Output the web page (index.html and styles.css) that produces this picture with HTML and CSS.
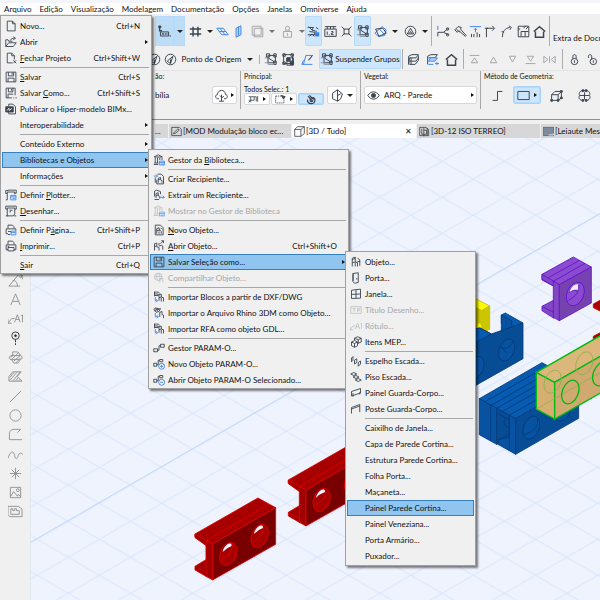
FILE: index.html
```html
<!DOCTYPE html>
<html lang="pt">
<head>
<meta charset="utf-8">
<title>3D / Tudo</title>
<link rel="stylesheet" href="styles.css">
</head>
<body>
<svg class="sprite" aria-hidden="true">
<symbol id="file" viewBox="0 0 16 16"><path d="M3 1.500h7l3.500 3.500v9.500H3zM10 1.500v3.500h3.500"/></symbol>
<symbol id="open" viewBox="0 0 16 16"><path d="M1 14V5h3l1 2h5M1 14l4-5h10l-4 5zM7 6c1-3 4-3 6-3M11 1l3 2-3 2"/></symbol>
<symbol id="close" viewBox="0 0 16 16"><path d="M10 14.500H3v-13h6l3.500 3.500v5M9 1.500V5h3.500M11 11l4 4M15 11l-4 4"/></symbol>
<symbol id="save" viewBox="0 0 16 16"><path d="M1.500 1.500h13v13h-13zM4.500 1.500v5h7v-5M9.500 2v3M4 14.500V9.500h8v5"/></symbol>
<symbol id="saveas" viewBox="0 0 16 16"><path d="M9 14.500H1.500v-13h12V11M4.500 1.500v5h6v-5M8.500 2v3M4 14.500V9.500h7M10.500 14.500h1M13 14.500h1M15 14.500h1"/></symbol>
<symbol id="bimx" viewBox="0 0 16 16"><path d="M5 5V1.500h5.500L14 5v9.500H5V12"/><path class="solid" d="M1 5h10v7H1z"/><path class="light" d="M3 10l2-3 1 3 3-3"/></symbol>
<symbol id="plotset" viewBox="0 0 16 16"><path d="M4 1.500h11v4h-2V4H3v2H1v-4h3M3 6v8.500H1M13 5v2"/><path class="blue" d="M7.500 8.500h7v6h-7zM8 10.500h6M10 12.500h3"/></symbol>
<symbol id="plot" viewBox="0 0 16 16"><path d="M3 5.500H1v-4h14v4h-2M3 4h10v8l-2 2.500H3zM1 14.500h3M12 14.500h3M6 7h4M6 9h2"/></symbol>
<symbol id="pageset" viewBox="0 0 16 16"><path d="M4 6V1.500h6l2 2V6M4 13H1.500V6.500h13V9M4 10h4M4 14h3"/><path class="blue" d="M8 9.500h6.500v5H8zM8 11.500h6"/></symbol>
<symbol id="print" viewBox="0 0 16 16"><path d="M4 6V1.500h6l2 2V6M4 13H1.500V6.500h13V13H12M4 10h8v4.500H4zM3.500 8.500h2"/></symbol>
<symbol id="library" viewBox="0 0 16 16"><path d="M1.500 4L7 1l5.500 3zM3 5v7M6 5v7M9 5v3M12 5v3M1.500 12H7M1 14h6"/><path class="blue" d="M8.500 9.500h7v5h-7zM8.500 11.500h7M11 13.500h3"/></symbol>
<symbol id="chairdoc" viewBox="0 0 16 16"><path d="M3 14.500v-13h7l3.500 3.500v9.500zM5 13V6l3-1 1 4M5 9l4-1 2 2v3M8 10v3M10 5l2 2"/></symbol>
<symbol id="container" viewBox="0 0 16 16"><path d="M6 1.500h5l3 3v10H5V9M7 13V7l3-1v3l2 1v3M7 9l3-1"/><path class="blue" d="M1 4h5M4 2l2 2-2 2"/><path d="M3 6v7"/></symbol>
<symbol id="extract" viewBox="0 0 16 16"><path d="M2 10V3l3-1.500 5 2V7M4 12V6l3-1v4l2 1v3M4 9l3-1M2 14h6"/><path class="blue" d="M9 11h6M13 9l2 2-2 2"/></symbol>
<symbol id="chair" viewBox="0 0 16 16"><path d="M3 14V3l4-1.500V8l3 1v5M3 9l4-1M3 5l4-2M7 9v5M9 8l4-1v6M10 3l3 2v3"/></symbol>
<symbol id="chairopen" viewBox="0 0 16 16"><path d="M2 14V5l3-1v5l3 1v4M2 9l3-1M8 8l3-1 2 1v5M8 7V4M10 5l4-4M11 1h3v3"/></symbol>
<symbol id="globe" viewBox="0 0 16 16"><path d="M7 1.500a5 5 0 1 0 5 5 5 5 0 0 0-5-5M2 6h10M7 1.500c-3 3-3 7 0 10M7 1.500c3 3 3 7 0 10M9 9l4-1v6M9 14v-5"/></symbol>
<symbol id="importa" viewBox="0 0 16 16"><path d="M1.500 1.500H7L9 3M2 4h5v2H2M8 13V5l3-1v4l3 1v5M8 9l3-1M11 9v5M2 1v6"/><path class="blue" d="M3 8v5h3M4 11l2 2-2 2"/></symbol>
<symbol id="importb" viewBox="0 0 16 16"><path d="M1 3l3-2 2 2 4-1-2 4-4 1zM2 5l6-3M9 13V7l3-1v4l2 1v4"/><path d="M3 2l4 4M5 1l4 4"/><path class="blue" d="M3 8v5h4M5 11l2 2-2 2"/></symbol>
<symbol id="param" viewBox="0 0 16 16"><path d="M1 9h5v4H1zM10 3h5v4h-5zM6 11h2V5h2"/></symbol>
<symbol id="paramplus" viewBox="0 0 16 16"><path d="M1 7h4v4H1zM9 2h4v3H9zM5 9h2V3h2"/><circle class="blue" cx="11.500" cy="11" r="4"/><path class="blue" d="M9.500 11h4M11.500 9v4"/></symbol>
<symbol id="paramopen" viewBox="0 0 16 16"><path d="M1 7h4v4H1zM9 2h4v3H9zM5 9h2V3h2"/><circle class="blue" cx="11.500" cy="11" r="4"/><path class="blue" d="M9.500 11h4"/></symbol>
<symbol id="door" viewBox="0 0 16 16"><path d="M4 2l7-1v13l-5 1-2-2zM4 2v10M9 8v2"/></symbol>
<symbol id="window" viewBox="0 0 16 16"><path d="M2 3l12-1.500v12L2 14zM8 2v12M2 8.500l12-.500"/></symbol>
<symbol id="title" viewBox="0 0 16 16"><path d="M1 3.500h14v9H1zM3.500 6h4M5.500 6v4.500M10 10.500V6h3v2.500h-3"/></symbol>
<symbol id="label" viewBox="0 0 16 16"><path d="M0 13l4-5h3M0 9v4h4M7 12l3-8 3 8M8 9h4M15.500 12V4l-1.500 1.500"/></symbol>
<symbol id="mep" viewBox="0 0 16 16"><path d="M2 8l4-2 4 2v5l-4 2-4-2zM2 8l4 2 4-2M6 10v5M6 6V3l4-2 5 2v5l-5 2M6 3l5 2 4-2M11 5v5"/></symbol>
<symbol id="riser" viewBox="0 0 16 16"><path d="M2 4l2-2v5L2 9zM6 7l3-2v5l-3 2zM11 10l3-2v4l-3 3z"/></symbol>
<symbol id="tread" viewBox="0 0 16 16"><path d="M1 4l4-2 4 2-4 2zM4 8l4-2 4 2-4 2zM7 12l4-2 4 2-4 2z"/></symbol>
<symbol id="panel" viewBox="0 0 16 16"><path d="M2 6l12-4v6L2 12zM4 13V8M13 7v3"/></symbol>
<symbol id="post" viewBox="0 0 16 16"><path d="M2 14V6l11-4v10M2 8l11-4"/></symbol>
<symbol id="xyz" viewBox="0 0 16 16"><path class="thick" d="M2 1v6h3M2 1L.500 3M2 1l2 2"/><path d="M3 8.500h10v5H3zM5 10l2 2M7 10l-2 2M9 10v2M11 10v2M14 13.500h2"/></symbol>
<symbol id="hash" viewBox="0 0 16 16"><path class="thick" d="M5 2v12M11 2v12M1 5h14M1 11h14"/></symbol>
<symbol id="plane" viewBox="0 0 16 16"><path class="blue" d="M1 4h8l6 8H7zM4 8h8M5 4l6 8"/></symbol>
<symbol id="vplane" viewBox="0 0 16 16"><path class="bluefill" d="M5 4l6-3v11l-6 3zM8 2v11"/></symbol>
<symbol id="trace" viewBox="0 0 16 16"><path d="M1.500 1.500h11v11h-11zM4 4h10.500v10.500H4z"/></symbol>
<symbol id="person" viewBox="0 0 16 16"><circle cx="8" cy="4" r="2.500"/><path d="M3 8h10v7H3zM6 6v2M10 6v2M8 10v3"/></symbol>
<symbol id="guide" viewBox="0 0 16 16"><path d="M1 3h7l-2 3 6 2M2 2l5 5M1 12h9M3 8l7 1-1 3M3 14l3-3 3 3M11 3l3 2"/><path class="bluesolid" d="M10 9h5v5h-5z"/></symbol>
<symbol id="ruler" viewBox="0 0 16 16"><path d="M1 2h14M1 5h14v9H1zM4 8v4M6 12h1M9 8h2v2H9v2h3M4 2v3M8 2v3M12 2v3"/></symbol>
<symbol id="snap" viewBox="0 0 16 16"><path d="M2 2l4 4M14 2l-4 4M2 14l4-4M14 14l-4-4M5 5h6v6H5z"/></symbol>
<symbol id="group" viewBox="0 0 16 16"><path d="M5 3h9v9H5zM3 1h4v4H3zM12 1h3v4h-3zM12 10h3v4h-3zM5 6l8 5"/><path class="muted" d="M1 6h4v8h7M1 12h4"/></symbol>
<symbol id="groupb" viewBox="0 0 16 16"><path d="M2 2h11v11H2zM1 1h3v3H1zM11 1h3v3h-3zM1 11h3v3H1zM6 6h8v9H6z"/><path class="solid" d="M6 6h4v4H6zM10 10h4v4h-4z"/></symbol>
<symbol id="rotate" viewBox="0 0 16 16"><path class="blue" d="M1 10l9-8 5 4-2 7-8 1zM6 4l7 8"/><path d="M2 5l9-1 4 6-9 4z"/></symbol>
<symbol id="circletri" viewBox="0 0 16 16"><circle cx="8" cy="8" r="6.500"/><path d="M4 11l4-7 4 7zM6 11l2-3 2 3"/></symbol>
<symbol id="scissors" viewBox="0 0 16 16"><path class="blue" d="M1 1v5"/><path d="M1 9h7l6-5M8 9l6 3M1 9v5"/><circle cx="13" cy="5" r="1.500"/><circle cx="13" cy="12" r="1.500"/></symbol>
<symbol id="axe" viewBox="0 0 16 16"><path d="M1 6l4-4 4 1-1 2 7 8-1 1-8-7-2 2zM3 5l4 4"/></symbol>
<symbol id="adjust" viewBox="0 0 16 16"><path class="blue" d="M1 2h14M8 9V4M6 6l2-2 2 2"/><path d="M3 15v-4M6 15v-4M10 15V9M13 15v-4"/></symbol>
<symbol id="corner" viewBox="0 0 16 16"><path d="M3 15V4h9M10 1l3 3-3 3M1 4h4"/></symbol>
<symbol id="arc" viewBox="0 0 16 16"><path d="M3 15C3 8 6 4 12 3M11 1l3 2-2 3M2 8l3 1"/></symbol>
<symbol id="resize" viewBox="0 0 16 16"><path d="M1.500 1.500h13v13h-13zM5 14V8h5v6M11 5l3-3M8 4l3-3M1 5h3M9 8h5"/></symbol>
<symbol id="house" viewBox="0 0 16 16"><path class="thick" d="M1 8l7-6 7 6M3 8v7h10V8"/></symbol>
<symbol id="compass" viewBox="0 0 16 16"><circle cx="8" cy="8" r="6.500"/><path d="M8 13l3-9-7 6zM8 8v5"/></symbol>
<symbol id="poly" viewBox="0 0 16 16"><path class="blue" d="M3 14l3-11h8l-4 6M1 14h13M3 9L1 14"/><path d="M9 9l5-6"/></symbol>
<symbol id="layers" viewBox="0 0 16 16"><path d="M2 14V4l4-2h8l-3 4H3zM3 10h8l3-4M3 14h7l4-5V3M5 6v8"/></symbol>
<symbol id="layersblue" viewBox="0 0 16 16"><path d="M2 14V4l4-2h8l-3 4H3"/><path class="bluefill" d="M3 10l3-4h8l-3 4z"/><path class="blue" d="M3 14h6M11 13h5M13.500 11v4"/></symbol>
<symbol id="toptri" viewBox="0 0 16 16"><path d="M2 3h12M4 12h8L8 6z"/></symbol>
<symbol id="uptri" viewBox="0 0 16 16"><path d="M4 12h8L8 5z"/></symbol>
<symbol id="downtri" viewBox="0 0 16 16"><path d="M4 4h8l-4 7z"/></symbol>
<symbol id="bottomtri" viewBox="0 0 16 16"><path d="M2 13h12M4 4h8l-4 6z"/></symbol>
<symbol id="fliptri" viewBox="0 0 16 16"><path d="M1 4v8l5-4zM15 4v8l-5-4zM8 4v8"/></symbol>
<symbol id="lock" viewBox="0 0 16 16"><path d="M6 7V4c0-2.500 4-2.500 4 0v3M8 9v3"/><ellipse cx="8" cy="10.500" rx="4" ry="3.800"/></symbol>
<symbol id="unlock" viewBox="0 0 16 16"><path d="M7 8V4c0-2.500-4-2.500-4 0v2M9 9v3"/><ellipse cx="9" cy="10.500" rx="4" ry="3.800"/></symbol>
<symbol id="tree" viewBox="0 0 16 16"><path d="M8 15V7M5 15h6M5 12H3C0 11 0 7 3 7c0-7 10-7 10 0 3 0 3 4 0 5h-2M8 11l3-2M8 10L6 8"/></symbol>
<symbol id="pick" viewBox="0 0 16 16"><path d="M1 4h8v5H1M4 4v8M1 12l2-2M9 4h3v7M14 3v8"/></symbol>
<symbol id="marquee" viewBox="0 0 16 16"><path class="dash" d="M1 3h12v10H1z"/><path class="solid" d="M9 2l6 2-3 3z"/></symbol>
<symbol id="clip" viewBox="0 0 16 16"><path class="thick" d="M2 8c0 8 11 8 11 1 0-5-7-5-7 0 0 3 4 3 4 0M3 3l6 7M5 2l6 6"/></symbol>
<symbol id="wallface" viewBox="0 0 16 16"><path d="M2 5l6-4v14l-6-3zM8 1l6 5-2 6-4 3M8 8l4-2"/></symbol>
<symbol id="eye" viewBox="0 0 16 16"><path d="M1 8c4-6 10-6 14 0-4 6-10 6-14 0z"/><circle class="solid" cx="8" cy="8" r="2.500"/></symbol>
<symbol id="step" viewBox="0 0 16 16"><path d="M2 14h6V3h6"/></symbol>
<symbol id="rect" viewBox="0 0 16 16"><path d="M1 3h14v10H1z"/></symbol>
<symbol id="box3d" viewBox="0 0 16 16"><path d="M2 7h8v7H2zM2 7l4-4h8v8l-4 3M10 7l4-4"/><path class="solid" d="M1 13h2v2H1zM9 13h2v2H9zM13 10h2v2h-2zM13 2h2v2h-2z"/></symbol>
<symbol id="brain" viewBox="0 0 16 16"><path d="M6 2C1 2 1 7 2 8c-2 3 0 6 4 6M10 2c5 0 5 5 4 6 2 3 0 6-4 6M8 4v9M2 8h12M6 2h4"/><path class="solid" d="M5 1h2v2H5zM9 1h2v2H9zM5 13h2v2H5zM9 13h2v2H9z"/></symbol>
<symbol id="sheet" viewBox="0 0 16 16"><path d="M1 2h11l3 3v9H1zM3 11l7-7 2 2-6 5H3z"/></symbol>
<symbol id="cube" viewBox="0 0 16 16"><path d="M1 5h9v10H1zM1 5l4-4h10l-5 4M15 1v10l-5 4"/></symbol>
<symbol id="section" viewBox="0 0 16 16"><path d="M1 2h9l4 3v9H1zM4 4v8h7V6H7M7 3v12M12 3v11"/></symbol>
<symbol id="layout" viewBox="0 0 16 16"><path class="slate" d="M0 2h16v12H0z"/><path class="light" d="M8 13h7v-2"/></symbol>
<symbol id="angle" viewBox="0 0 16 16"><path d="M1 14L11 2M1 14h12M5 8c4 0 5 3 5 6M16 2c-3 7-5 0-2 0l2 5"/></symbol>
<symbol id="letter" viewBox="0 0 16 16"><path d="M3 14L8 2l5 12M5 10h6"/></symbol>
<symbol id="pin" viewBox="0 0 16 16"><circle cx="8" cy="5" r="4"/><circle class="solid" cx="8" cy="5" r="1"/><path d="M8 9v3M8 13v2"/></symbol>
<symbol id="zone" viewBox="0 0 16 16"><path d="M5 2h4c3 0 3 2 3 3 4 1 4 5 0 6 0 3-1 3-4 3-3 0-3-1-3-3-5-1-5-5 0-5zM3 8l3-3M4 10l7-7M6 12l8-7M8 14l6-6M3 6h10M3 10h10"/></symbol>
<symbol id="hatch" viewBox="0 0 16 16"><path d="M1 13V8l4-5h9l-4 5 5 5zM2 12l8-9M5 13l8-10M2 9l5-6M8 13l3-4M11 13l2-2"/></symbol>
<symbol id="line" viewBox="0 0 16 16"><path d="M2 14L14 2"/></symbol>
<symbol id="circle" viewBox="0 0 16 16"><circle cx="8" cy="8" r="6"/></symbol>
<symbol id="polyline" viewBox="0 0 16 16"><path d="M15 13.500H1.500V8c0-5 3-5.500 6-5.500h6L10 6"/></symbol>
<symbol id="spline" viewBox="0 0 16 16"><path d="M0 12C3 3 6 4 7 9c1 5 3 4 4 0 1-3 3-3 5-1"/></symbol>
<symbol id="star" viewBox="0 0 16 16"><path d="M8 2v12M2 8h12M4 4l8 8M12 4l-8 8"/></symbol>
<symbol id="image" viewBox="0 0 16 16"><path d="M2.500 2.500h11v11h-11zM3 12l3-5 4 5 1-2 3 3"/><circle cx="10.500" cy="5.500" r="1.500"/></symbol>
<symbol id="drawing" viewBox="0 0 16 16"><path d="M0 2.500h11l4 3v8H2l-2-2zM3 5v6h9V7H9V5H7v2H5V5z"/></symbol>
</svg>

<div class="app">
<nav class="menubar">
<button>Arquivo</button><button>Edição</button><button>Visualização</button><button>Modelagem</button><button>Documentação</button><button>Opções</button><button>Janelas</button><button>Omniverse</button><button>Ajuda</button>
</nav>

<div class="bar bar-main">
<button class="on deep"><svg><use href="#xyz"/></svg></button><button class="on deep caret"></button>
<button><svg><use href="#hash"/></svg></button><button class="caret"></button>
<button class="dim"><svg><use href="#plane"/></svg></button>
<button><svg><use href="#vplane"/></svg></button>
<button class="dim"><svg><use href="#trace"/></svg></button><button class="caret dim"></button>
<button class="dim"><svg><use href="#person"/></svg></button><button class="caret dim"></button>
<button class="on"><svg><use href="#guide"/></svg></button>
<button><svg><use href="#ruler"/></svg></button>
<button><svg><use href="#snap"/></svg></button>
<button class="on"><svg><use href="#group"/></svg></button>
<button><svg><use href="#rotate"/></svg></button><button class="caret"></button>
<button><svg><use href="#circletri"/></svg></button><button class="caret"></button>
<i class="rule"></i>
<button><svg><use href="#scissors"/></svg></button>
<button><svg><use href="#axe"/></svg></button>
<button><svg><use href="#adjust"/></svg></button>
<button><svg><use href="#corner"/></svg></button>
<button><svg><use href="#arc"/></svg></button>
<button><svg><use href="#resize"/></svg></button>
<button><svg><use href="#house"/></svg></button>
<i class="rule"></i>
<span class="extra">Extra de Docu</span>
</div>

<div class="bar bar-edit">
<button><svg><use href="#compass"/></svg></button>
<button><svg><use href="#compass"/></svg></button>
<button class="origin">Ponto de Origem<span class="caret"></span></button>
<i class="rule short"></i>
<button><svg><use href="#group"/></svg></button>
<button><svg><use href="#groupb"/></svg></button>
<button><svg><use href="#poly"/></svg></button>
<button class="on wide"><svg><use href="#group"/></svg>Suspender Grupos</button>
<i class="rule"></i>
<button><svg><use href="#layers"/></svg></button>
<button><svg><use href="#layersblue"/></svg></button>
<button><svg><use href="#house"/></svg></button>
<i class="rule"></i>
<button class="dim"><svg><use href="#toptri"/></svg></button>
<button class="dim"><svg><use href="#uptri"/></svg></button>
<button class="dim"><svg><use href="#downtri"/></svg></button>
<button class="dim"><svg><use href="#bottomtri"/></svg></button>
<button class="dim"><svg><use href="#fliptri"/></svg></button>
<i class="rule"></i>
<button><svg><use href="#lock"/></svg></button>
<button><svg><use href="#unlock"/></svg></button>
</div>

<div class="info">
<section>
<h2>ão:</h2>
<div class="fields split"><span>bília</span><button class="box"><svg><use href="#tree"/></svg><span class="next"></span></button></div>
</section>
<section>
<h2>Principal:</h2>
<div class="fields picks">
<div class="count">Todos Selec.: 1
<div class="trio"><button class="box"><svg><use href="#pick"/></svg><span class="next"></span></button><button class="box"><svg><use href="#marquee"/></svg><span class="next"></span></button><button class="box on"><svg><use href="#clip"/></svg></button></div></div>
<button class="box"><svg><use href="#wallface"/></svg><span class="caret"></span></button>
</div>
</section>
<section>
<h2>Vegetal:</h2>
<div class="fields"><button class="box layer"><svg><use href="#eye"/></svg><span>ARQ - Parede</span><span class="next"></span></button></div>
</section>
<section>
<h2>Método de Geometria:</h2>
<div class="fields shapes"><button><svg><use href="#step"/></svg></button><button class="box on"><svg><use href="#rect"/></svg><span class="next"></span></button><button><svg><use href="#box3d"/></svg></button><button><svg><use href="#brain"/></svg></button></div>
</section>
</div>

<div class="tabs">
<button class="first">...</button>
<button><svg><use href="#sheet"/></svg>[MOD Modulação bloco ec...</button>
<button class="active"><svg><use href="#cube"/></svg>[3D / Tudo]<span class="x">✕</span></button>
<button><svg><use href="#section"/></svg>[3D-12 ISO TERREO]</button>
<button><svg><use href="#layout"/></svg>[Leiaute Mest</button>
</div>

<div class="work">
<aside class="tools">
<div><button><svg><use href="#angle"/></svg></button><button><svg><use href="#letter"/></svg></button><button><svg><use href="#label"/></svg></button></div>
<div><button class="strong"><svg><use href="#pin"/></svg></button><button><svg><use href="#zone"/></svg></button><button><svg><use href="#hatch"/></svg></button></div>
<div><button><svg><use href="#line"/></svg></button><button><svg><use href="#circle"/></svg></button><button><svg><use href="#polyline"/></svg></button></div>
<div><button><svg><use href="#spline"/></svg></button><button><svg><use href="#star"/></svg></button><button><svg><use href="#image"/></svg></button><button><svg><use href="#drawing"/></svg></button></div>
</aside>
<svg class="scene" viewBox="31 138 569 462" preserveAspectRatio="xMinYMin slice">
<defs>
<pattern id="grid" x="68.300" y="413.300" width="62.300" height="36" patternUnits="userSpaceOnUse"><path d="M0 0L62.300 36M62.300 0L0 36" stroke="#d8e5fb" fill="none"/></pattern>
<g id="block" stroke-linejoin="round">
<path class="top" d="M495 432L684 324L737 353L548 462L530 451L530 458L495 440z"/>
<path class="side" d="M495 432L548 462L530 468L495 443zM495 529L530 508V560L495 540z"/>
<path class="side" d="M528 452L548 462V570L528 559z"/>
<path class="front" d="M548 462L737 353V463L548 570z"/>
<path class="edge" d="M528 452L716 343M495 529L528 548"/>
<g id="hole"><ellipse class="top" cx="595" cy="492" rx="24" ry="36" transform="rotate(22 595 492)"/><path d="M580 478Q590 458 604 461L605 468Q588 474 578 486z" fill="#eef3fe"/><path class="edge" d="M607 464Q609 492 575 508"/></g>
<use href="#hole" x="94" y="-54"/>
</g>
</defs>
<rect x="31" y="138" width="1600" height="1400" fill="#eef3fe"/>
<rect x="31" y="138" width="1600" height="1400" fill="url(#grid)"/>
<path d="M31 542L1200 -133" stroke="#bfd8f8" fill="none"/>
<g transform="translate(30 390) scale(.3333)">
<use href="#block" class="red"/><use href="#block" class="red" x="280" y="-162"/>
</g>
<g transform="translate(470 240) scale(.3333)">
<g class="yellow"><path class="top" d="M0 167L59 198L35 212L0 194z"/><path class="front" d="M0 194L35 212L59 198V268L35 280L0 290z"/><path class="top" d="M18 262Q22 244 32 250Q40 262 32 272z"/></g>
<g class="blue3d">
<path class="top" d="M94 225L106 219L159 249L128 262L94 250z"/>
<path class="side" d="M94 225L125 242V268L94 284z"/>
<path class="front" d="M0 272L30 264L64 282L159 249V356L0 446z"/>
<path class="top" d="M0 268L30 264L64 282L0 317z"/>
<ellipse class="side" cx="110" cy="330" rx="22" ry="35" transform="rotate(22 110 330)"/><path class="edge" d="M92 320Q112 335 129 306M92 320L110 339"/>
<ellipse class="side" cx="18" cy="383" rx="22" ry="35" transform="rotate(22 18 383)"/>
<path class="top" d="M28 476L216 368L326 428L137 536z"/>
<path class="side" d="M28 476L80 505V613L28 584z"/>
<path class="front" d="M80 505L118 526V600L80 613z"/>
<path class="side" d="M118 526L137 536V643L118 632L84 613V600L118 591z"/>
<path class="front" d="M137 536L326 428V535L137 643z"/>
<path class="edge" d="M45 485L233 378M64 496L252 388M80 505L268 397M98 514L287 407M118 526L307 418M62 495V602M118 526V632M84 600L118 581M84 520L118 540M104 535Q96 555 118 566"/>
<ellipse class="side" cx="184" cy="563" rx="23" ry="36" transform="rotate(22 184 563)"/><path class="edge" d="M202 535Q210 570 164 584"/>
<ellipse class="side" cx="278" cy="509" rx="23" ry="36" transform="rotate(22 278 509)"/>
</g>
<g class="purple">
<path class="top" d="M216 103L310 51L364 81L268 134L252 124V139L216 120z"/>
<path class="side" d="M216 103L252 124V139L216 118zM216 199L252 180V235L216 212z"/>
<path class="side" d="M250 124L268 134V242L250 232z"/>
<path class="front" d="M268 134L364 81V189L268 242z"/>
<path class="edge" d="M250 124L345 70M235 113L329 61M216 199L250 217"/>
<ellipse class="top" cx="316" cy="162" rx="25" ry="37" transform="rotate(22 316 162)"/><path d="M300 152Q310 130 325 133L325 151Q318 144 300 157z" fill="#eef3fe"/><path class="edge" d="M326 134Q332 163 295 181M298 158Q316 144 322 157"/>
</g>
<g class="red"><path class="top" d="M370 192L410 170V223L370 203zM370 289L410 268V310L370 300z"/></g>
<g class="wood">
<path class="side" d="M199 397L254 427V537L199 507z"/>
<path class="top" d="M199 397L440 259L495 290L254 427z"/>
<path class="front" d="M254 427L495 290V400L254 537z"/>
<path class="faint" d="M199 507L440 370"/>
<ellipse class="faint" cx="248" cy="425" rx="24" ry="36" transform="rotate(22 248 425)"/>
<ellipse class="faint" cx="343" cy="370" rx="24" ry="36" transform="rotate(22 343 370)"/>
<ellipse cx="301" cy="456" rx="24" ry="37" transform="rotate(22 301 456)"/>
<ellipse cx="394" cy="402" rx="24" ry="37" transform="rotate(22 394 402)"/>
</g>
</g>
</svg>
</div>
</div>

<div class="menu menu-file">
<button><svg><use href="#file"/></svg><span>Novo...</span><kbd>Ctrl+N</kbd></button>
<button class="parent"><svg><use href="#open"/></svg><span>Abrir</span><b class="next"></b></button>
<button><svg><use href="#close"/></svg><span><u>F</u>echar Projeto</span><kbd>Ctrl+Shift+W</kbd></button>
<hr>
<button><svg><use href="#save"/></svg><span><u>S</u>alvar</span><kbd>Ctrl+S</kbd></button>
<button><svg><use href="#saveas"/></svg><span>Salvar <u>C</u>omo...</span><kbd>Ctrl+Shift+S</kbd></button>
<button><svg><use href="#bimx"/></svg><span>Publicar o Hiper-modelo BIMx...</span></button>
<button class="parent"><span>Interoperabilidade</span><b class="next"></b></button>
<hr>
<button class="parent"><span>Conteúdo Externo</span><b class="next"></b></button>
<button class="parent sel"><span>Bibliotecas e Objetos</span><b class="next"></b></button>
<button class="parent"><span>Informações</span><b class="next"></b></button>
<hr>
<button><svg><use href="#plotset"/></svg><span>Definir <u>P</u>lotter...</span></button>
<button><svg><use href="#plot"/></svg><span><u>D</u>esenhar...</span></button>
<hr>
<button><svg><use href="#pageset"/></svg><span>Definir P<u>á</u>gina...</span><kbd>Ctrl+Shift+P</kbd></button>
<button><svg><use href="#print"/></svg><span><u>I</u>mprimir...</span><kbd>Ctrl+P</kbd></button>
<hr>
<button><span><u>S</u>air</span><kbd>Ctrl+Q</kbd></button>
</div>

<div class="menu menu-library">
<button><svg><use href="#library"/></svg><span>Gestor da <u>B</u>iblioteca...</span></button>
<hr>
<button><svg><use href="#container"/></svg><span>Criar Recipiente...</span></button>
<button><svg><use href="#extract"/></svg><span>Extrair um Recipiente...</span></button>
<button disabled><svg><use href="#library"/></svg><span>Mostrar no Gestor de Biblioteca</span></button>
<hr>
<button><svg><use href="#chairdoc"/></svg><span><u>N</u>ovo Objeto...</span></button>
<button><svg><use href="#chairopen"/></svg><span><u>A</u>brir Objeto...</span><kbd>Ctrl+Shift+O</kbd></button>
<button class="parent sel"><svg><use href="#save"/></svg><span>Salvar Seleção como...</span><b class="next"></b></button>
<button disabled><svg><use href="#globe"/></svg><span>Compartilhar Objeto...</span></button>
<hr>
<button><svg><use href="#importa"/></svg><span>Importar Blocos a partir de DXF/DWG</span></button>
<button><svg><use href="#importb"/></svg><span>Importar o Arquivo Rhino 3DM como Objeto...</span></button>
<button><svg><use href="#importa"/></svg><span>Importar RFA como objeto GDL...</span></button>
<hr>
<button><svg><use href="#param"/></svg><span>Gestor PARAM-O...</span></button>
<button><svg><use href="#paramplus"/></svg><span>Novo Objeto PARAM-O...</span></button>
<button><svg><use href="#paramopen"/></svg><span>Abrir Objeto PARAM-O Selecionado...</span></button>
</div>

<div class="menu menu-save">
<button><svg><use href="#chair"/></svg><span>Objeto...</span></button>
<button><svg><use href="#door"/></svg><span>Porta...</span></button>
<button><svg><use href="#window"/></svg><span>Janela...</span></button>
<button disabled><svg><use href="#title"/></svg><span>Título Desenho...</span></button>
<button disabled><svg><use href="#label"/></svg><span>Rótulo...</span></button>
<button><svg><use href="#mep"/></svg><span>Itens MEP...</span></button>
<hr>
<button><svg><use href="#riser"/></svg><span>Espelho Escada...</span></button>
<button><svg><use href="#tread"/></svg><span>Piso Escada...</span></button>
<button><svg><use href="#panel"/></svg><span>Painel Guarda-Corpo...</span></button>
<button><svg><use href="#post"/></svg><span>Poste Guarda-Corpo...</span></button>
<hr>
<button><span>Caixilho de Janela...</span></button>
<button><span>Capa de Parede Cortina...</span></button>
<button><span>Estrutura Parede Cortina...</span></button>
<button><span>Folha Porta...</span></button>
<button><span>Maçaneta...</span></button>
<button class="sel"><span>Painel Parede Cortina...</span></button>
<button><span>Painel Veneziana...</span></button>
<button><span>Porta Armário...</span></button>
<button><span>Puxador...</span></button>
</div>
</body>
</html>
```

FILE: styles.css
```css
* { box-sizing: border-box; }
html, body { height: 100%; margin: 0; }
body { position: relative; overflow: hidden; background: #f0f0f0; color: #111; font: 8px/10px Lato, "Open Sans", sans-serif; }
button { margin: 0; padding: 0; border: 0; background: none; color: inherit; font: inherit; white-space: nowrap; text-align: left; }
h2 { margin: 0; font: 7px/10px Lato, sans-serif; }
svg { fill: none; stroke: currentColor; stroke-width: 1.2; overflow: visible; }
.sprite { position: absolute; width: 0; height: 0; }
button svg { width: 13px; height: 13px; flex: none; display: block; color: #3c4550; }
.solid { fill: currentColor; }
.light { stroke: #fff; }
.muted { stroke: #8c9299; }
.thick { stroke-width: 1.8; }
.dash { stroke-dasharray: 2 1; }
.blue { stroke: #3f86ea; }
.bluefill { stroke: #3f86ea; fill: #b9d6fb; }
.bluesolid { stroke: none; fill: #2f7df0; }
.slate { fill: #7d8b9b; stroke: #5a6674; }

.app { display: flex; flex-direction: column; height: 100%; }
.menubar { display: flex; gap: 8px; height: 14px; padding: 1px 4px 0; background: #fff; border-top: 3px solid #f3f5fb; }

.bar { display: grid; flex: none; align-items: center; }
.bar button { display: flex; align-items: center; justify-content: center; align-self: stretch; }
.bar-main { height: 33px; padding: 2px 0 1px 155px; grid-template-columns: 19px 11px 20px 9px 16px 16px 22px 7px 24px 6px 17px 17px 15px 17px 19px 10px 20px 10px 3px 20px 14px 16px 15px 17px 17px 15px 4px 1fr; }
.bar-edit { height: 23px; padding: 2px 0 1px 146px; grid-template-columns: 16px 16px 79px 4px 18px 18px 20px 84px 3px 19px 19px 19px 4px 19px 19px 18px 19px 19px 6px 18px 18px; }
.on { background: #cce6fd; border-radius: 2px; box-shadow: inset 0 0 0 1px #b6dafb; }
.deep { background: #bddcf6; border-radius: 0; }
.dim svg { color: #a3a6aa; }
.dim .blue { stroke: #9dbfef; }
.caret::before { content: ""; border: 3px solid transparent; border-top: 3px solid #222; border-bottom: 0; display: block; }
.caret.dim::before { border-top-color: #777; }
.next::before { content: ""; border: 2px solid transparent; border-left: 3px solid #111; border-right: 0; display: block; }
.rule { width: 1px; height: 100%; margin: auto; background: #adadad; }
.rule.short { height: 9px; }
.extra { align-self: end; padding: 0 0 3px 2px; white-space: nowrap; }
.bar .origin { gap: 6px; }
.bar .wide { gap: 2px; margin-left: 2px; }

.info { display: grid; flex: none; grid-template-columns: 86px 120px 120px 1fr; height: 50px; padding-left: 155px; border-top: 1px solid #e4e4e4; border-bottom: 1px solid #909090; }
.info section { height: 38px; padding-right: 3px; border-right: 1px solid #a8a8a8; }
.info section + section { padding-left: 3px; }
.info section:last-child { border: 0; }
.fields { display: flex; align-items: center; height: 18px; margin-top: 5px; }
.split { justify-content: space-between; }
.box { display: flex; align-items: center; justify-content: space-evenly; height: 18px; background: #fff; border: 1px solid #d8d8d8; border-radius: 2px; }
.box.on { background: #cce6fd; border-color: #a9d2f7; }
.split .box { width: 25px; }
.picks { justify-content: space-between; }
.count { font-size: 7px; line-height: 8px; }
.trio { display: flex; gap: 1px; }
.trio .box { width: 26px; height: 12px; }
.trio svg { width: 11px; height: 11px; }
.picks > .box { width: 30px; }
.layer { width: 100%; padding: 0 2px; gap: 4px; justify-content: flex-start; }
.layer .next { margin-left: auto; }
.shapes { gap: 9px; padding-left: 7px; }
.shapes .box { width: 28px; }
.shapes button:nth-child(3) { margin-right: 6px; }

.tabs { display: grid; flex: none; grid-template-columns: 13px 122px 124px 123px 1fr; gap: 1px; height: 18px; padding: 4px 0 0 155px; }
.tabs button { display: flex; align-items: center; gap: 1px; padding-left: 2px; background: #d7d7d7; }
.tabs .first { padding-left: 0; }
.tabs .active { background: #fff; }
.tabs svg { width: 11px; height: 11px; }
.x { margin: 0 4px 0 auto; }

.work { display: grid; grid-template-columns: 31px 1fr; flex: 1; min-height: 0; }
.tools { display: flex; flex-direction: column; gap: 1px; padding: 133px 0 0 6px; border-right: 1px solid #e4e8f0; overflow: hidden; }
.tools button { display: flex; align-items: center; width: 18px; height: 19px; justify-content: center; }
.tools svg { width: 15px; height: 15px; color: #8f9295; stroke-width: 1; }
.tools .strong svg { color: #333; }
.scene { width: 100%; height: 100%; overflow: hidden; stroke: none; stroke-width: 1; }
.red { --top: #a60000; --side: #a00000; --front: #780000; --edge: #dc0000; }
.blue3d { --top: #075bb0; --side: #0753a2; --front: #064d96; --edge: #06387a; }
.purple { --top: #8a4bd0; --side: #8248c4; --front: #7642b0; --edge: #6710cc; }
.yellow { --top: #fdfb00; --side: #d8d300; --front: #cbc600; --edge: #c9b800; }
.wood { --top: #dcb77c; --side: #d6ae72; --front: #cfa96f; --edge: #00ba12; stroke: #00ba12; }
.top { fill: var(--top); stroke: var(--edge); stroke-width: 2.5; }
.side { fill: var(--side); stroke: var(--edge); stroke-width: 2.5; }
.front { fill: var(--front); stroke: var(--edge); stroke-width: 2.5; }
.edge { stroke: var(--edge); stroke-width: 2.5; }
.wood > * { stroke-width: 4; }
.wood .faint { stroke: #8db34c; stroke-width: 2.5; }

.menu { position: absolute; background: #f0f0f0; border: 1px solid #a0a0a0; box-shadow: 2px 2px 2px rgba(0, 0, 0, .5); padding: 2px 1px 0; }
.menu-file { left: 0; top: 15px; width: 152px; }
.menu-library { left: 148px; top: 149px; width: 201px; }
.menu-save { left: 345px; top: 251px; width: 131px; padding-bottom: 1px; }
.menu button { display: grid; grid-template-columns: 18px 1fr auto; align-items: center; width: 100%; height: 16px; padding-right: 10px; }
.menu .parent { padding-right: 2px; }
.menu button > span { grid-column: 2; }
.menu svg { justify-self: center; width: 12px; height: 12px; }
.menu kbd { font: inherit; }
.menu hr { height: 1px; margin: 1px 1px 1px 18px; border: 0; background: #a8a8a8; }
.menu .sel { background: #90c5f0; box-shadow: inset 0 0 0 1px #3681bd; }
.menu button:disabled { color: #a6a6a6; }
.menu button:disabled svg { color: #b0b3b6; opacity: .7; }
.menu u { text-underline-offset: 1px; }
```
